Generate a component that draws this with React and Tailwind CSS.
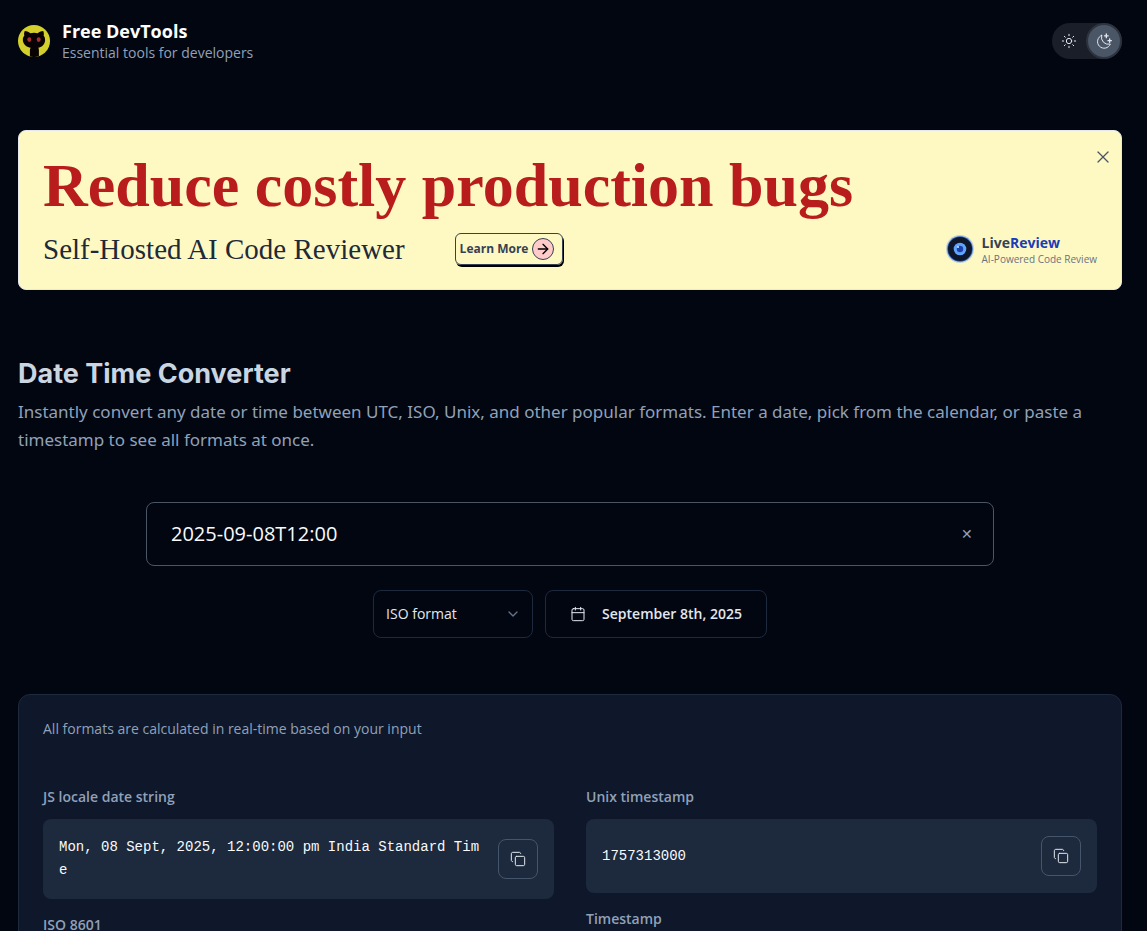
import { Sun, Calendar, Copy, X, ArrowRight, ChevronDown } from "lucide-react";

function Logo() {
  return (
    <svg viewBox="0 0 32 32" className="size-8 shrink-0" aria-hidden="true">
      <circle cx="16" cy="16" r="16" fill="#d3cf2c" />
      <path
        fill="#080204"
        d="M6.800 6C9 6 11.300 7.400 12.300 8.200a16 16 0 0 1 7.400 0C20.700 7.400 23 6 25.200 6c.8 1.800.8 3.400.4 4.500 1.300 1.600 1.700 3.600 1.400 5.700-.6 3.900-3.500 5.900-6.800 6.500.6.700.7 1.600.7 2.800V31.200a16 16 0 0 1-9 .3v-6c0-1.200.2-2.100.8-2.800-3.600-.6-7-2.600-7.700-6.500-.4-2.100 0-4.100 1.400-5.700-.5-1.200-.5-2.900.4-4.500Z"
      />
      <ellipse cx="11.300" cy="14.600" rx="2" ry="2.300" fill="#a52f2f" />
      <ellipse cx="20.700" cy="14.600" rx="2" ry="2.300" fill="#a52f2f" />
    </svg>
  );
}

function MoonStars() {
  return (
    <svg viewBox="0 0 24 24" className="size-4" fill="none" stroke="currentColor" strokeWidth="1.500" strokeLinecap="round" strokeLinejoin="round" aria-hidden="true">
      <path d="M8.500 3.500A10 10 0 1 0 21.500 16.500 10.500 10.500 0 0 1 8.500 3.500Z" />
      <path d="M15.500 1.500v5.500M12.800 4.200h5.500M20.500 9v5M18 11.500h5" strokeWidth="2" />
    </svg>
  );
}

function EyeLogo() {
  return (
    <svg viewBox="0 0 28 28" className="size-7 shrink-0" aria-hidden="true">
      <circle cx="14" cy="14" r="14" fill="#93b4e8" opacity=".6" />
      <circle cx="14" cy="14" r="12.800" fill="#2f62c4" />
      <circle cx="14" cy="14" r="12" fill="#0f172a" />
      <circle cx="14" cy="14" r="6.300" fill="#60a5fa" />
      <circle cx="14" cy="14" r="3.200" fill="#1e40af" />
      <circle cx="12" cy="12" r="1" fill="#dbeafe" />
    </svg>
  );
}

function Format({ label, value }) {
  return (
    <div>
      <h3 className="mb-3 text-sm font-semibold text-slate-400">{label}</h3>
      {value && (
        <div className="flex items-center gap-4 rounded-lg bg-slate-800 px-4 py-[17px]">
          <p className="min-w-0 flex-1 break-all font-['Liberation_Mono',monospace] text-sm leading-[23px] text-slate-50">{value}</p>
          <button type="button" aria-label={`Copy ${label}`} className="flex size-10 shrink-0 items-center justify-center rounded-lg border border-slate-600 text-slate-200">
            <Copy size={16} strokeWidth={1.5} />
          </button>
        </div>
      )}
    </div>
  );
}

export default function App() {
  return (
    <div className="min-h-screen bg-[#020611] pr-[25px] pl-[18px] font-['Open_Sans',sans-serif]">
      <header className="flex items-center justify-between pt-[19px]">
        <a href="#" className="flex items-center gap-3">
          <Logo />
          <div>
            <div className="text-lg leading-6 font-bold text-white">Free DevTools</div>
            <div className="text-sm leading-5 text-slate-400">Essential tools for developers</div>
          </div>
        </a>
        <div className="flex h-9 items-center rounded-full bg-[#1a1e28] text-slate-200">
          <button type="button" aria-label="Light theme" className="flex h-9 w-[34px] items-center justify-center">
            <Sun size={16} strokeWidth={1.5} />
          </button>
          <button type="button" aria-label="Dark theme" className="flex size-9 items-center justify-center rounded-full border-2 border-[#2d333f] bg-gray-600">
            <MoonStars />
          </button>
        </div>
      </header>

      <section className="relative mt-[67px] rounded-lg border border-gray-200 bg-[#fef9c3] px-6 pt-[22px] pb-5">
        <h2 className="font-['Liberation_Serif',serif] text-[62px] leading-[64px] font-bold text-[#b91c1c]">Reduce costly production bugs</h2>
        <div className="mt-3 flex items-center justify-between">
          <div className="flex items-center gap-[50px]">
            <p className="font-['Liberation_Serif',serif] text-[29px] leading-10 text-gray-800">Self-Hosted AI Code Reviewer</p>
            <a href="#" className="flex h-8 items-center gap-1 rounded-md border border-gray-700 px-1 pr-2 text-xs font-bold text-gray-700 shadow-[1px_2px_0_0_#000]">
              Learn More
              <span className="flex size-[22px] items-center justify-center rounded-full border border-gray-700 bg-[#fecaca] text-black">
                <ArrowRight size={16} />
              </span>
            </a>
          </div>
          <a href="#" className="flex items-center gap-2">
            <EyeLogo />
            <span className="block pt-1">
              <span className="block text-sm leading-4 font-bold text-gray-700">Live<span className="text-blue-800">Review</span></span>
              <span className="block text-[10px] leading-4 text-gray-500">AI-Powered Code Review</span>
            </span>
          </a>
        </div>
        <button type="button" aria-label="Close banner" className="absolute top-4 right-2 text-gray-600">
          <X size={20} strokeWidth={1.5} />
        </button>
      </section>

      <main>
        <h1 className="mt-16 font-['Inter',sans-serif] text-[27px] leading-10 font-bold text-slate-300">Date Time Converter</h1>
        <p className="mt-1 font-['Noto_Sans',sans-serif] text-[17px] leading-7 text-slate-400">
          Instantly convert any date or time between UTC, ISO, Unix, and other popular formats. Enter a date, pick from the calendar, or paste a timestamp to see all formats at once.
        </p>

        <div className="mx-auto mt-12 flex h-16 max-w-[848px] items-center rounded-lg border border-gray-600 pr-5 pl-6">
          <input aria-label="Date or timestamp" defaultValue="2025-09-08T12:00" className="min-w-0 flex-1 bg-transparent text-xl text-slate-50 outline-none" />
          <button type="button" aria-label="Clear" className="text-sm text-slate-400">✕</button>
        </div>

        <div className="mt-6 flex justify-center gap-3">
          <div className="relative w-40">
            <select aria-label="Format" className="h-12 w-full appearance-none rounded-lg border border-slate-800 bg-transparent px-3 text-sm text-slate-200">
              <option>ISO format</option>
            </select>
            <ChevronDown size={16} className="pointer-events-none absolute top-4 right-3 text-slate-500" />
          </div>
          <button type="button" className="flex h-12 items-center gap-4 rounded-lg border border-slate-800 px-6 text-sm font-semibold text-slate-200">
            <Calendar size={16} strokeWidth={1.5} />
            September 8th, 2025
          </button>
        </div>

        <section className="mt-14 rounded-xl border border-slate-800 bg-[#0f172a] p-6">
          <p className="text-sm text-slate-400">All formats are calculated in real-time based on your input</p>
          <div className="mt-12 grid grid-cols-2 items-start gap-8">
            <div className="flex flex-col gap-4">
              <Format label="JS locale date string" value="Mon, 08 Sept, 2025, 12:00:00 pm India Standard Time" />
              <Format label="ISO 8601" />
            </div>
            <div className="flex flex-col gap-4">
              <Format label="Unix timestamp" value="1757313000" />
              <Format label="Timestamp" />
            </div>
          </div>
        </section>
      </main>
    </div>
  );
}
